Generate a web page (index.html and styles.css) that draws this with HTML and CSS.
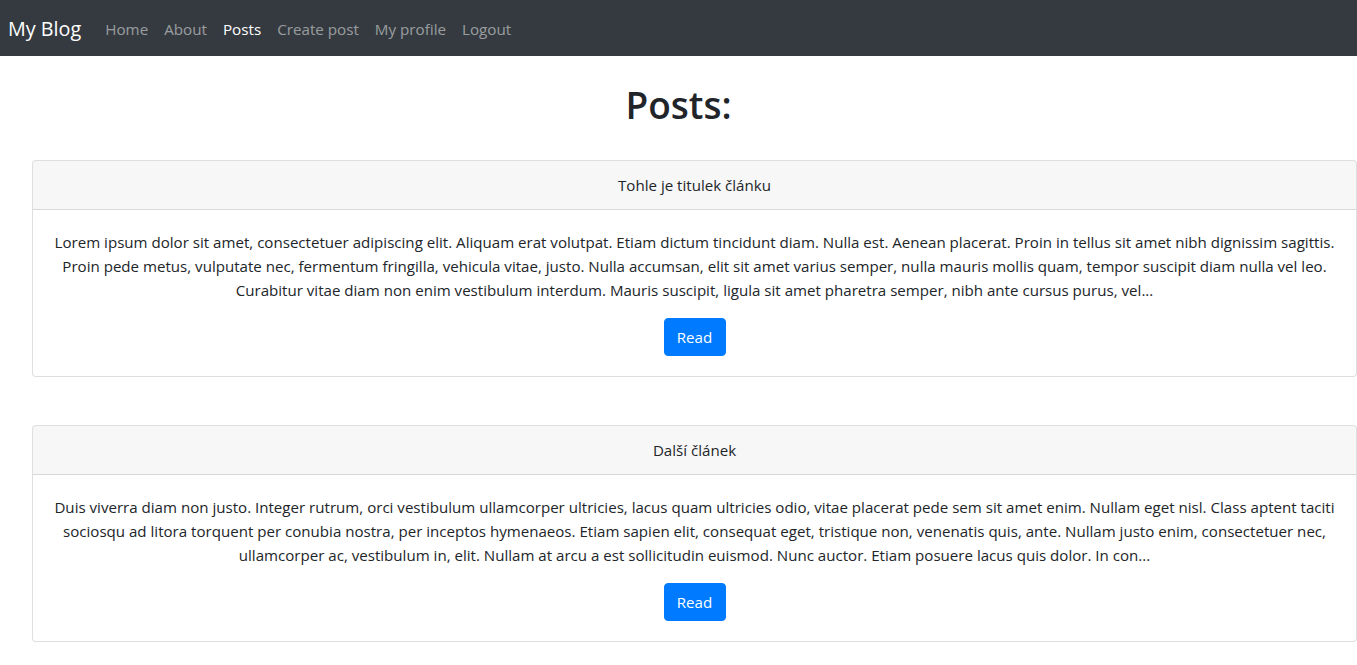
FILE: index.html
```html
<!DOCTYPE html>
<html lang="cs">
<head>
<meta charset="utf-8">
<title>My Blog</title>
<link rel="stylesheet" href="styles.css">
</head>
<body>
<nav class="navbar">
  <a class="brand" href="#">My Blog</a>
  <ul class="nav">
    <li><a class="nav-link" href="#">Home</a></li>
    <li><a class="nav-link" href="#">About</a></li>
    <li><a class="nav-link active" href="#">Posts</a></li>
    <li><a class="nav-link" href="#">Create post</a></li>
    <li><a class="nav-link" href="#">My profile</a></li>
    <li><a class="nav-link" href="#">Logout</a></li>
  </ul>
</nav>
<main class="content">
  <h1 class="title">Posts:</h1>
  <div class="card">
    <div class="card-header">Tohle je titulek článku</div>
    <div class="card-body">
      <p class="card-text">Lorem ipsum dolor sit amet, consectetuer adipiscing elit. Aliquam erat volutpat. Etiam dictum tincidunt diam. Nulla est. Aenean placerat. Proin in tellus sit amet nibh dignissim sagittis. Proin pede metus, vulputate nec, fermentum fringilla, vehicula vitae, justo. Nulla accumsan, elit sit amet varius semper, nulla mauris mollis quam, tempor suscipit diam nulla vel leo. Curabitur vitae diam non enim vestibulum interdum. Mauris suscipit, ligula sit amet pharetra semper, nibh ante cursus purus, vel...</p>
      <a class="btn" href="#">Read</a>
    </div>
  </div>
  <div class="card">
    <div class="card-header">Další článek</div>
    <div class="card-body">
      <p class="card-text">Duis viverra diam non justo. Integer rutrum, orci vestibulum ullamcorper ultricies, lacus quam ultricies odio, vitae placerat pede sem sit amet enim. Nullam eget nisl. Class aptent taciti sociosqu ad litora torquent per conubia nostra, per inceptos hymenaeos. Etiam sapien elit, consequat eget, tristique non, venenatis quis, ante. Nullam justo enim, consectetuer nec, ullamcorper ac, vestibulum in, elit. Nullam at arcu a est sollicitudin euismod. Nunc auctor. Etiam posuere lacus quis dolor. In con...</p>
      <a class="btn" href="#">Read</a>
    </div>
  </div>
</main>
</body>
</html>
```
FILE: styles.css
```css
* { box-sizing: border-box; }
html, body { margin: 0; padding: 0; }
body {
  font-family: "Open Sans", "Noto Sans", sans-serif;
  font-size: 15.1px;
  line-height: 24px;
  color: #212529;
  background: #fff;
  overflow: hidden;
}
a { text-decoration: none; }

.navbar {
  display: flex;
  align-items: center;
  height: 56px;
  padding: 9px 8px 7px;
  background: #343a40;
}
.brand {
  font-size: 19.8px;
  line-height: 30px;
  color: #fff;
  margin-right: 16px;
  padding: 5px 0;
}
.nav {
  display: flex;
  list-style: none;
  margin: 0;
  padding: 0;
}
.nav-link {
  display: block;
  padding: 8px 8px;
  font-size: 15.2px;
  line-height: 24px;
  color: rgba(255, 255, 255, 0.5);
}
.nav-link.active { color: #fff; }

.title {
  margin: 25px 0 31px;
  font-size: 37px;
  line-height: 48px;
  font-weight: 600;
  text-align: center;
  color: #212529;
}
.card {
  width: 1325px;
  margin: 0 0 48px 32px;
  border: 1px solid rgba(0, 0, 0, 0.125);
  border-radius: 4px;
  text-align: center;
  background: #fff;
}
.card-header {
  padding: 12px 20px;
  background: rgba(0, 0, 0, 0.03);
  border-bottom: 1px solid rgba(0, 0, 0, 0.125);
  border-radius: 3px 3px 0 0;
}
.card-body {
  padding: 20px 20px;
}
.card-text {
  margin: 0 0 16px;
}
.btn {
  display: inline-block;
  width: 62px;
  padding: 6px 0;
  border: 1px solid #007bff;
  border-radius: 4px;
  background: #007bff;
  color: #fff;
  font-size: 15.1px;
  line-height: 24px;
  text-align: center;
}
```
